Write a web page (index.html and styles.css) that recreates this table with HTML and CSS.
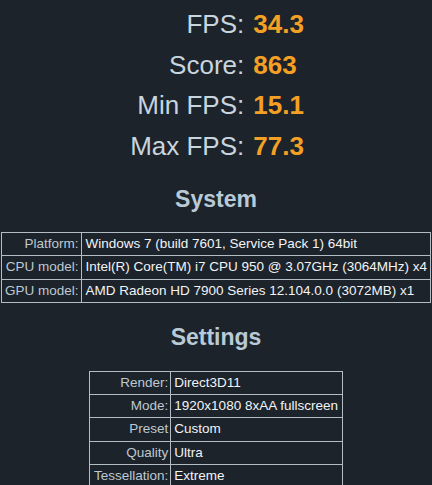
FILE: index.html
```html
<!DOCTYPE html>
<html>
<head>
<meta charset="utf-8">
<link rel="stylesheet" href="styles.css">
</head>
<body>
<div class="page">
  <div class="stats">
    <div class="stat-label">FPS:</div><div class="stat-value">34.3</div>
    <div class="stat-label">Score:</div><div class="stat-value">863</div>
    <div class="stat-label">Min FPS:</div><div class="stat-value">15.1</div>
    <div class="stat-label">Max FPS:</div><div class="stat-value">77.3</div>
  </div>

  <h2 class="heading heading-system">System</h2>
  <table class="info info-system">
    <tr><td class="key">Platform:</td><td class="val">Windows 7 (build 7601, Service Pack 1) 64bit</td></tr>
    <tr><td class="key">CPU model:</td><td class="val">Intel(R) Core(TM) i7 CPU 950 @ 3.07GHz (3064MHz) x4</td></tr>
    <tr><td class="key">GPU model:</td><td class="val">AMD Radeon HD 7900 Series 12.104.0.0 (3072MB) x1</td></tr>
  </table>

  <h2 class="heading heading-settings">Settings</h2>
  <table class="info info-settings">
    <tr><td class="key">Render:</td><td class="val">Direct3D11</td></tr>
    <tr><td class="key">Mode:</td><td class="val">1920x1080 8xAA fullscreen</td></tr>
    <tr><td class="key">Preset</td><td class="val">Custom</td></tr>
    <tr><td class="key">Quality</td><td class="val">Ultra</td></tr>
    <tr><td class="key">Tessellation:</td><td class="val">Extreme</td></tr>
  </table>
</div>
</body>
</html>
```

FILE: styles.css
```css
html, body {
  margin: 0;
  padding: 0;
  background: #1c232b;
  height: 100%;
  overflow: hidden;
}

body {
  font-family: "Liberation Sans", Arial, sans-serif;
  color: #c6d2dc;
}

.page {
  display: flex;
  flex-direction: column;
  align-items: center;
}

.stats {
  display: grid;
  grid-template-columns: auto auto;
  column-gap: 9px;
  padding-top: 4px;
  font-size: 26px;
  line-height: 40.5px;
  margin-left: 2px;
}

.stat-label {
  text-align: right;
  color: #c8d5df;
}

.stat-value {
  text-align: left;
  font-weight: bold;
  color: #f4a024;
}

.heading {
  margin: 0;
  font-size: 23px;
  line-height: 28px;
  font-weight: bold;
  color: #b9cad7;
}

.heading-system {
  margin-top: 19px;
  margin-bottom: 19px;
}

.heading-settings {
  margin-top: 20px;
  margin-bottom: 20px;
}

.info {
  border-collapse: collapse;
  font-size: 13.5px;
  line-height: 18.3px;
}

.info td {
  border: 1px solid #b3bdc5;
  padding: 2px 3px;
  white-space: nowrap;
}

.info .key {
  text-align: right;
  color: #bfc9d1;
}

.info .val {
  text-align: left;
  color: #f2f4f6;
}

.info-system {
  width: 426px;
}

.info-system .key {
  width: 74px;
}

.info-settings .key {
  padding-left: 4px;
  padding-right: 2px;
}

.info-settings .val {
  padding-right: 4px;
}
```
